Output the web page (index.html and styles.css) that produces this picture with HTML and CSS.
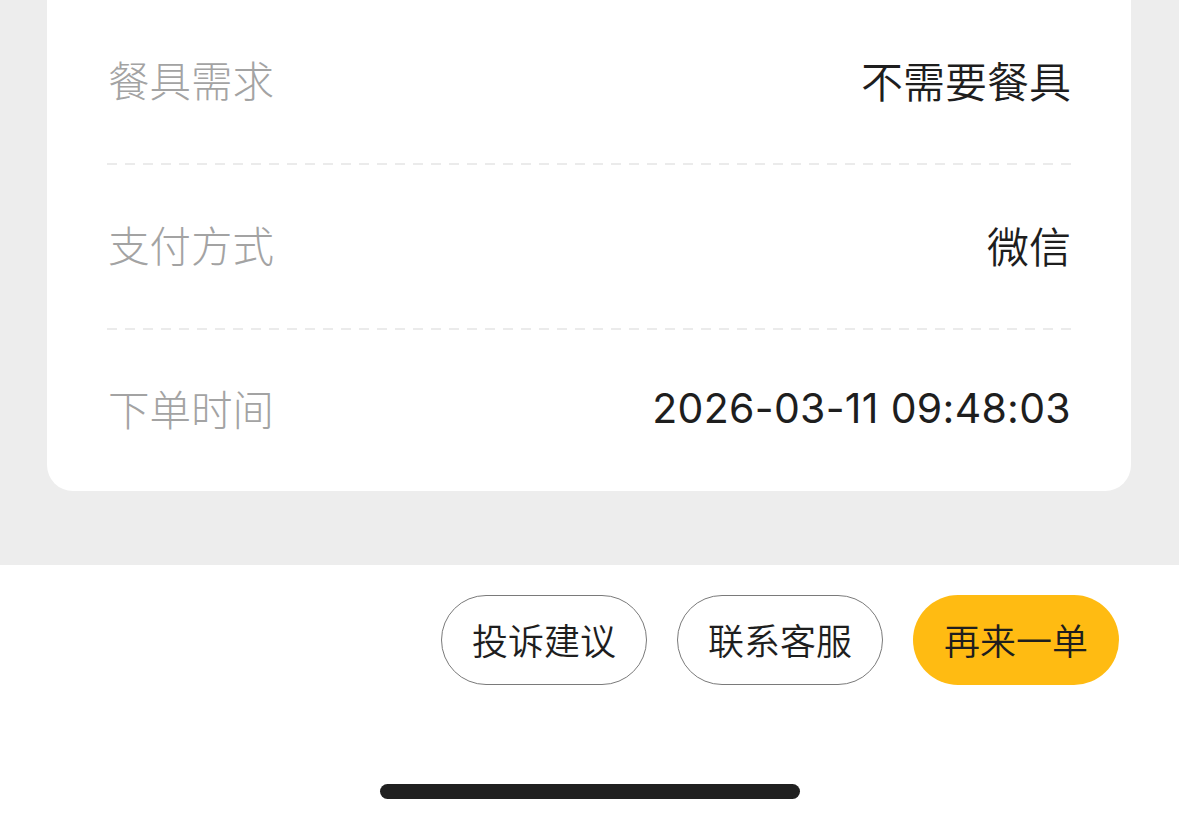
FILE: index.html
```html
<!DOCTYPE html>
<html lang="zh-CN">
<head>
<meta charset="utf-8">
<link rel="stylesheet" href="styles.css">
</head>
<body>
<div class="page">
  <main class="content">
    <section class="card">
      <div class="row"><span class="label">餐具需求</span><span class="value">不需要餐具</span></div>
      <div class="sep"></div>
      <div class="row"><span class="label">支付方式</span><span class="value">微信</span></div>
      <div class="sep"></div>
      <div class="row last"><span class="label">下单时间</span><span class="value num">2026-03-11 09:48:03</span></div>
    </section>
  </main>
  <footer class="bar">
    <div class="actions">
      <button class="btn outline">投诉建议</button>
      <button class="btn outline">联系客服</button>
      <button class="btn primary">再来一单</button>
    </div>
    <div class="home-indicator"></div>
  </footer>
</div>
</body>
</html>
```
FILE: styles.css
```css
* { box-sizing: border-box; }
html, body { margin: 0; padding: 0; }
body {
  width: 1179px;
  height: 823px;
  overflow: hidden;
  background: #ededed;
  font-family: "Noto Sans CJK SC", "Noto Sans", sans-serif;
  font-weight: 300;
}
.page {
  display: flex;
  flex-direction: column;
  height: 823px;
}
.content {
  height: 565px;
  background: #ededed;
  padding: 0 48px 0 47px;
}
.card {
  margin-top: 0;
  background: #fff;
  border-radius: 0 0 26px 26px;
  padding: 0 60px 0 61px;
}
.row {
  height: 163px;
  padding-bottom: 5px;
  display: flex;
  align-items: center;
  justify-content: space-between;
}
.row.last {
  height: 161px;
}
.label {
  font-size: 41.5px;
  color: #a3a3a3;
}
.value {
  font-size: 42px;
  font-weight: 350;
  color: #1e1e1e;
}
.num {
  font-family: "Inter", "Noto Sans", sans-serif;
  font-weight: 400;
  font-size: 41px;
  letter-spacing: 0.3px;
}
.sep {
  height: 2px;
  margin: 0 -1px;
  background: repeating-linear-gradient(to right, #ebebeb 0 10px, transparent 10px 18px);
}
.bar {
  flex: 1;
  background: #fff;
  display: flex;
  flex-direction: column;
  align-items: center;
}
.actions {
  align-self: stretch;
  display: flex;
  justify-content: flex-end;
  gap: 30px;
  padding: 30px 60px 0 0;
}
.btn {
  width: 206px;
  height: 90px;
  border-radius: 45px;
  font-family: "Noto Sans CJK SC", "Noto Sans", sans-serif;
  font-weight: 350;
  font-size: 36px;
  color: #1e1e1e;
  display: flex;
  align-items: center;
  justify-content: center;
  padding: 0 0 3px;
  cursor: pointer;
}
.outline {
  background: #fff;
  border: 1px solid #7a7a7a;
}
.primary {
  background: #ffbb12;
  border: none;
}
.home-indicator {
  margin-top: 99px;
  width: 420px;
  height: 15px;
  border-radius: 8px;
  background: #202020;
}
```
